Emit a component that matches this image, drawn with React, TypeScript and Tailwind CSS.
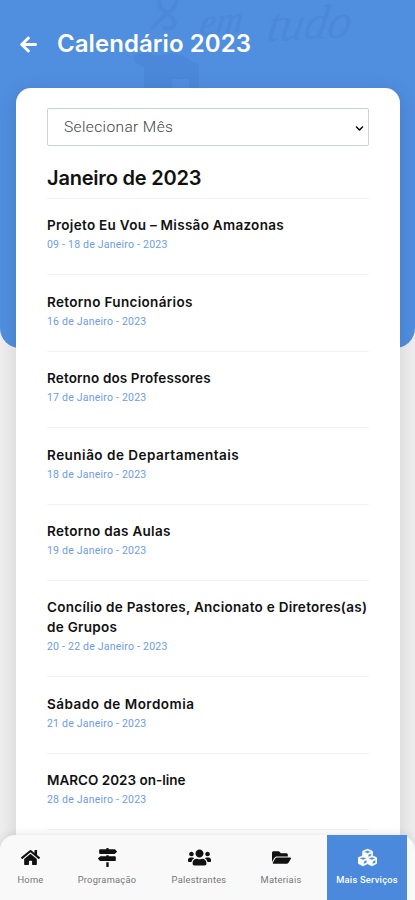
import React from 'react';
import {
  FaArrowLeft,
  FaChevronDown,
  FaCubes,
  FaFolderOpen,
  FaHome,
  FaMapSigns,
  FaUsers,
} from 'react-icons/fa';

interface CalendarEvent {
  title: string;
  date: string;
  tracking: string;
}

interface NavItemProps {
  label: string;
  icon: React.ReactNode;
  active?: boolean;
}

const events: CalendarEvent[] = [
  {
    title: 'Projeto Eu Vou – Missão Amazonas',
    date: '09 - 18 de Janeiro - 2023',
    tracking: 'tracking-[0.29px]',
  },
  { title: 'Retorno Funcionários', date: '16 de Janeiro - 2023', tracking: 'tracking-[0.33px]' },
  { title: 'Retorno dos Professores', date: '17 de Janeiro - 2023', tracking: 'tracking-[0.13px]' },
  {
    title: 'Reunião de Departamentais',
    date: '18 de Janeiro - 2023',
    tracking: 'tracking-[0.49px]',
  },
  { title: 'Retorno das Aulas', date: '19 de Janeiro - 2023', tracking: 'tracking-[0.3px]' },
  {
    title: 'Concílio de Pastores, Ancionato e Diretores(as) de Grupos',
    date: '20 - 22 de Janeiro - 2023',
    tracking: 'tracking-[0.28px]',
  },
  { title: 'Sábado de Mordomia', date: '21 de Janeiro - 2023', tracking: 'tracking-[0.5px]' },
  { title: 'MARCO 2023 on-line', date: '28 de Janeiro - 2023', tracking: 'tracking-[0px]' },
];

const HeaderArtwork = () => {
  return (
    <div className="absolute inset-x-0 top-0 h-[88px] overflow-hidden text-[#4b88d9]">
      <svg className="absolute left-[132px] top-0" width="70" height="88" viewBox="0 0 70 88">
        <path
          d="M28 0c-4 8 8 13 13 19 5 7-3 12-10 8M44 0c3 9-14 14-24 29"
          fill="none"
          stroke="currentColor"
          strokeWidth="4"
        />
        <path
          d="M2 55l14-3 8 4 18-3 11 4 9 6 5 1v24H57V79H40v9H12V67L2 62z"
          fill="currentColor"
        />
      </svg>
      <span className="absolute left-[200px] top-0 -rotate-6 -skew-x-12 font-['Liberation_Serif',serif] text-[37px] italic leading-[42px]">
        em
      </span>
      <span className="absolute left-[268px] top-0 -rotate-3 -skew-x-12 font-['Liberation_Serif',serif] text-[48px] italic leading-[46px] tracking-[-0.3px]">
        tudo
      </span>
    </div>
  );
};

const EventItem = ({ title, date, tracking }: CalendarEvent) => {
  return (
    <li className="border-t border-[#f3f3f3] pb-[21.6px] pt-[16.4px]">
      <h3 className={`text-[13.5px] font-semibold leading-5 text-[#111] ${tracking}`}>{title}</h3>
      <p className="pt-[2px] font-[Roboto,sans-serif] text-[10.5px] leading-[15.4px] tracking-[0.22px] text-[#6d9bea]">
        {date}
      </p>
    </li>
  );
};

const NavItem = ({ label, icon, active }: NavItemProps) => {
  return (
    <a
      className={`flex flex-col items-center pt-[13px] ${
        active ? 'ml-2.5 bg-[#4a89dc] text-white' : 'text-[#111]'
      }`}
    >
      <span className="flex h-[19px] items-center text-[19px]">{icon}</span>
      <span
        className={`mt-[7px] whitespace-nowrap font-[Roboto,sans-serif] text-[9.3px] leading-3 tracking-[0.25px] ${
          active ? 'font-medium text-white' : 'text-[#777]'
        }`}
      >
        {label}
      </span>
    </a>
  );
};

const App = () => {
  return (
    <div className="relative flex h-[900px] w-[415px] flex-col overflow-hidden bg-[#eee] font-[Inter,sans-serif]">
      <div className="absolute inset-x-0 top-0 h-[348px] rounded-b-[20px] bg-[#508edf]" />
      <HeaderArtwork />
      <header className="relative flex h-[88px] shrink-0 items-center pl-[19px] text-white">
        <FaArrowLeft className="size-[19px]" />
        <h1 className="ml-[19px] text-[24px] font-semibold leading-8 tracking-[0.06px]">
          Calendário 2023
        </h1>
      </header>
      <main className="relative ml-4 mr-[15px] h-[812px] shrink-0 rounded-t-[15px] bg-white px-[31px] pt-5 shadow-[0_4px_20px_rgba(0,0,0,0.12)]">
        <button className="flex h-[38px] w-full items-center justify-between rounded-[2px] border border-[#ccd0d2] pl-4 pr-1 pt-0.5 font-[Roboto,sans-serif] text-[15.5px] font-light tracking-[0.38px] text-[#444]">
          Selecionar Mês
          <FaChevronDown className="size-[9px] text-black" />
        </button>
        <h2 className="mb-[7px] mt-[19px] text-[20px] font-semibold leading-[26px] tracking-[-0.2px] text-[#111]">
          Janeiro de 2023
        </h2>
        <ul>
          {events.map((event) => (
            <EventItem key={event.title} {...event} />
          ))}
          <li className="border-t border-[#f3f3f3]" />
        </ul>
      </main>
      <nav className="absolute inset-x-0 bottom-0 grid h-[65px] grid-cols-[61px_92px_92px_72px_90px] rounded-t-[15px] bg-[#f9f9f9] shadow-[0_0_10px_rgba(0,0,0,0.12)]">
        <NavItem label="Home" icon={<FaHome />} />
        <NavItem label="Programação" icon={<FaMapSigns />} />
        <NavItem label="Palestrantes" icon={<FaUsers className="size-[23px]" />} />
        <NavItem label="Materiais" icon={<FaFolderOpen />} />
        <NavItem
          label="Mais Serviços"
          icon={<FaCubes className="stroke-current stroke-[16px] [stroke-linejoin:round]" />}
          active
        />
      </nav>
    </div>
  );
};

export default App;
